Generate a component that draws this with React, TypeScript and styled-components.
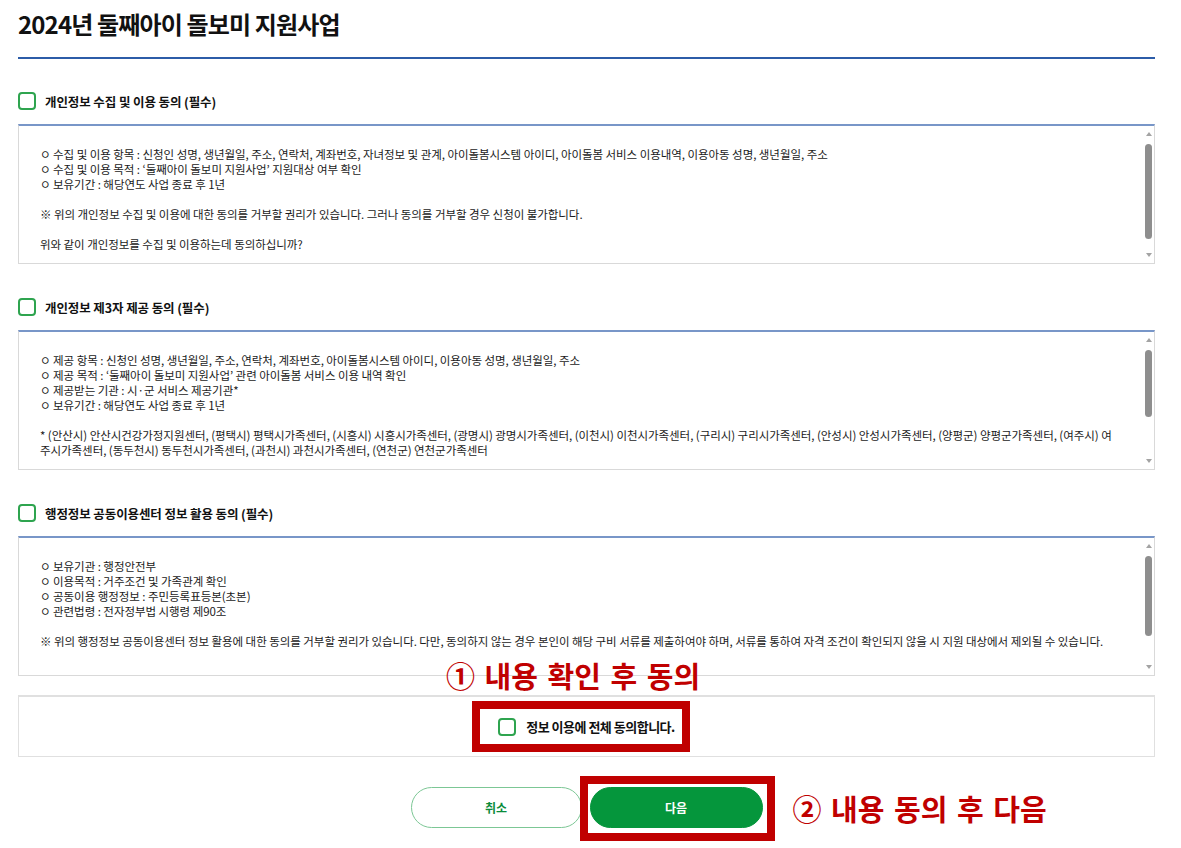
import React from "react";
import styled, { createGlobalStyle } from "styled-components";

const GlobalStyle = createGlobalStyle`
  * { box-sizing: border-box; }
  body {
    margin: 0;
    background: #fff;
    color: #222;
    font-family: "Noto Sans CJK KR", "Noto Sans", sans-serif;
  }
`;

const Page = styled.div`
  width: 1137px;
  margin-left: 18px;
  padding-bottom: 20px;
`;

const Title = styled.h1`
  margin: 0;
  height: 59px;
  line-height: 48px;
  font-size: 24px;
  font-weight: 700;
  letter-spacing: -0.85px;
  color: #111;
  border-bottom: 2px solid #2c5ca8;
`;

const Sections = styled.div`
  display: flex;
  flex-direction: column;
  gap: 34px;
  padding-top: 33px;
`;

const SectionHead = styled.label`
  display: flex;
  align-items: center;
  gap: 9px;
  height: 18px;
  margin-bottom: 14px;
`;

const Check = styled.input.attrs({ type: "checkbox" })`
  appearance: none;
  margin: 0;
  flex: none;
  width: 18px;
  height: 18px;
  border: 2px solid #2ea44f;
  border-radius: 4px;
  background: #fff;
`;

const SectionLabel = styled.span`
  font-size: 12.5px;
  font-weight: 700;
  letter-spacing: -0.1px;
  color: #111;
`;

const TermsBox = styled.div`
  display: flex;
  height: 140px;
  border: 1px solid #d9d9d9;
  border-top: 2px solid #7896c8;
`;

const TermsBody = styled.div`
  flex: 1;
  min-width: 0;
  overflow: hidden;
  padding: 21px 23px 0 21px;
  font-size: 11.5px;
  line-height: 15px;
  letter-spacing: -0.05px;
  color: #1a1a1a;
`;

const Scrollbar = styled.div`
  flex: none;
  width: 11px;
  display: flex;
  flex-direction: column;
  align-items: center;
`;

const Arrow = styled.div<{ $down?: boolean }>`
  flex: none;
  height: 16px;
  display: flex;
  align-items: center;
  justify-content: center;

  &::before {
    content: "";
    border-left: 3.5px solid transparent;
    border-right: 3.5px solid transparent;
    ${(p) =>
      p.$down ? "border-top: 4px solid #a3a3a3;" : "border-bottom: 4px solid #a3a3a3;"}
  }
`;

const Track = styled.div`
  flex: 1;
  padding-top: 2px;
`;

const Thumb = styled.div<{ $size: number }>`
  width: 7px;
  height: ${(p) => p.$size}px;
  border-radius: 4px;
  background: #8e8e8e;
`;

const Group = styled.div`
  & + & {
    margin-top: 15px;
  }
`;

const Line = styled.p`
  margin: 0;
`;

const AgreeBox = styled.div`
  position: relative;
  margin-top: 19px;
  height: 62px;
  border: 1px solid #e0e0e0;
  border-top-width: 2px;
  display: flex;
  justify-content: center;
  align-items: center;
`;

const Highlight = styled.label`
  display: flex;
  align-items: center;
  gap: 10px;
  margin-right: 11px;
  border: 8px solid #c00000;
  padding: 8px 7px 8px 18px;
`;

const AgreeText = styled.span`
  font-size: 13px;
  font-weight: 700;
  letter-spacing: -0.5px;
  color: #111;
`;

const Callout = styled.span`
  font-size: 29px;
  font-weight: 700;
  line-height: 1;
  word-spacing: 3px;
  color: #c00000;
  white-space: nowrap;
`;

const CalloutAbove = styled(Callout)`
  position: absolute;
  left: 427px;
  top: -36px;
`;

const CalloutSide = styled(Callout)`
  position: absolute;
  left: calc(100% + 30px);
  top: 50%;
  transform: translateY(-50%);
`;

const Buttons = styled.div`
  display: flex;
  justify-content: center;
  gap: 8px;
  margin-top: 30px;
`;

const Button = styled.button<{ $primary?: boolean }>`
  width: ${(p) => (p.$primary ? 173 : 171)}px;
  height: 41px;
  border-radius: 21px;
  font-family: inherit;
  font-size: 12px;
  font-weight: 700;
  cursor: pointer;
  border: 1px solid ${(p) => (p.$primary ? "#05963c" : "#7cc795")};
  background: ${(p) => (p.$primary ? "#05963c" : "#fff")};
  color: ${(p) => (p.$primary ? "#fff" : "#0a8c3a")};
`;

const Marked = styled.div`
  position: relative;
  display: flex;

  &::after {
    content: "";
    position: absolute;
    inset: -11px -12px -13px -10px;
    border: 8px solid #c00000;
    pointer-events: none;
  }
`;

type Section = { label: string; thumb: number; groups: string[][] };

const sections: Section[] = [
  {
    label: "개인정보 수집 및 이용 동의 (필수)",
    thumb: 95,
    groups: [
      [
        "ㅇ 수집 및 이용 항목 : 신청인 성명, 생년월일, 주소, 연락처, 계좌번호, 자녀정보 및 관계, 아이돌봄시스템 아이디, 아이돌봄 서비스 이용내역, 이용아동 성명, 생년월일, 주소",
        "ㅇ 수집 및 이용 목적 : ‘둘째아이 돌보미 지원사업’ 지원대상 여부 확인",
        "ㅇ 보유기간 : 해당연도 사업 종료 후 1년",
      ],
      ["※ 위의 개인정보 수집 및 이용에 대한 동의를 거부할 권리가 있습니다. 그러나 동의를 거부할 경우 신청이 불가합니다."],
      ["위와 같이 개인정보를 수집 및 이용하는데 동의하십니까?"],
    ],
  },
  {
    label: "개인정보 제3자 제공 동의 (필수)",
    thumb: 67,
    groups: [
      [
        "ㅇ 제공 항목 : 신청인 성명, 생년월일, 주소, 연락처, 계좌번호, 아이돌봄시스템 아이디, 이용아동 성명, 생년월일, 주소",
        "ㅇ 제공 목적 : ‘둘째아이 돌보미 지원사업’ 관련 아이돌봄 서비스 이용 내역 확인",
        "ㅇ 제공받는 기관 : 시·군 서비스 제공기관*",
        "ㅇ 보유기간 : 해당연도 사업 종료 후 1년",
      ],
      [
        "* (안산시) 안산시건강가정지원센터, (평택시) 평택시가족센터, (시흥시) 시흥시가족센터, (광명시) 광명시가족센터, (이천시) 이천시가족센터, (구리시) 구리시가족센터, (안성시) 안성시가족센터, (양평군) 양평군가족센터, (여주시) 여주시가족센터, (동두천시) 동두천시가족센터, (과천시) 과천시가족센터, (연천군) 연천군가족센터",
      ],
    ],
  },
  {
    label: "행정정보 공동이용센터 정보 활용 동의 (필수)",
    thumb: 80,
    groups: [
      [
        "ㅇ 보유기관 : 행정안전부",
        "ㅇ 이용목적 : 거주조건 및 가족관계 확인",
        "ㅇ 공동이용 행정정보 : 주민등록표등본(초본)",
        "ㅇ 관련법령 : 전자정부법 시행령 제90조",
      ],
      [
        "※ 위의 행정정보 공동이용센터 정보 활용에 대한 동의를 거부할 권리가 있습니다. 다만, 동의하지 않는 경우 본인이 해당 구비 서류를 제출하여야 하며, 서류를 통하여 자격 조건이 확인되지 않을 시 지원 대상에서 제외될 수 있습니다.",
      ],
    ],
  },
];

export default function App() {
  return (
    <Page>
      <GlobalStyle />
      <Title>2024년 둘째아이 돌보미 지원사업</Title>

      <Sections>
        {sections.map((s) => (
          <section key={s.label}>
            <SectionHead>
              <Check />
              <SectionLabel>{s.label}</SectionLabel>
            </SectionHead>
            <TermsBox>
              <TermsBody>
                {s.groups.map((g, i) => (
                  <Group key={i}>
                    {g.map((line) => (
                      <Line key={line}>{line}</Line>
                    ))}
                  </Group>
                ))}
              </TermsBody>
              <Scrollbar aria-hidden>
                <Arrow />
                <Track>
                  <Thumb $size={s.thumb} />
                </Track>
                <Arrow $down />
              </Scrollbar>
            </TermsBox>
          </section>
        ))}
      </Sections>

      <AgreeBox>
        <CalloutAbove>① 내용 확인 후 동의</CalloutAbove>
        <Highlight>
          <Check />
          <AgreeText>정보 이용에 전체 동의합니다.</AgreeText>
        </Highlight>
      </AgreeBox>

      <Buttons>
        <Button>취소</Button>
        <Marked>
          <Button $primary>다음</Button>
          <CalloutSide>② 내용 동의 후 다음</CalloutSide>
        </Marked>
      </Buttons>
    </Page>
  );
}
